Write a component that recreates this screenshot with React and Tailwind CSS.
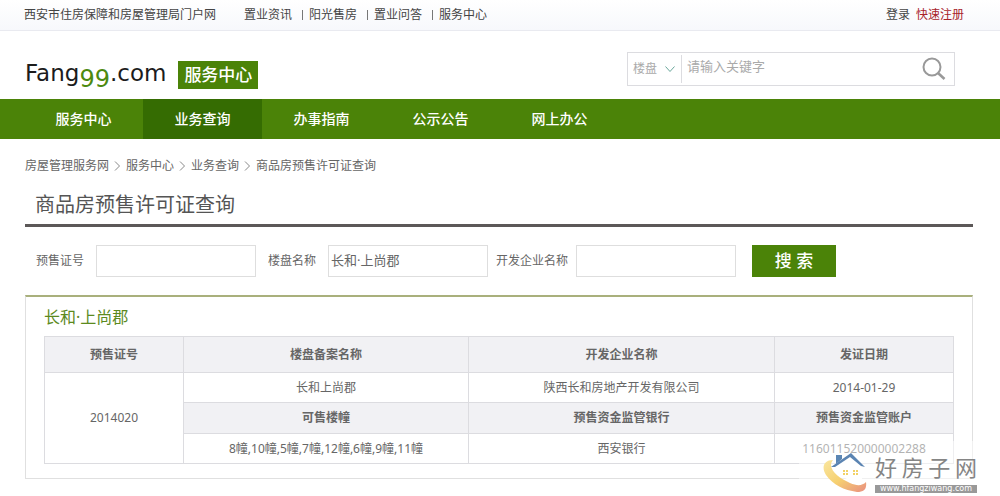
import { useState } from 'react';
import clsx from 'clsx';

const topLinks = ['置业资讯', '阳光售房', '置业问答', '服务中心'];

const navItems = ['服务中心', '业务查询', '办事指南', '公示公告', '网上办公'];

const crumbs = ['房屋管理服务网', '服务中心', '业务查询', '商品房预售许可证查询'];

const searchFields = [
  { name: 'permitNo', label: '预售证号', className: 'gap-3 mr-3' },
  { name: 'projectName', label: '楼盘名称', className: 'gap-3 mr-2' },
  { name: 'company', label: '开发企业名称', className: 'gap-2 mr-4' },
];

const permit = {
  title: '长和·上尚郡',
  number: '2014020',
  project: '长和上尚郡',
  company: '陕西长和房地产开发有限公司',
  date: '2014-01-29',
  buildings: '8幢,10幢,5幢,7幢,12幢,6幢,9幢,11幢',
  bank: '西安银行',
  account: '116011520000002288',
};

const TopBar = () => (
  <div className="flex h-[31px] items-center border-b border-[#e9eaf0] bg-linear-to-b from-white to-[#f7f8fc] pl-6 pr-9 text-[#444]">
    <a href="#home" className="mr-7">西安市住房保障和房屋管理局门户网</a>
    <ul className="flex items-center">
      {topLinks.map((link, i) => (
        <li key={link} className="flex items-center">
          {i > 0 && <span className="ml-2.5 mr-1.5 h-2.5 w-px bg-[#777]" />}
          <a href="#link">{link}</a>
        </li>
      ))}
    </ul>
    <div className="ml-auto flex gap-1.5">
      <a href="#login">登录</a>
      <a href="#register" className="text-[#a8222a]">快速注册</a>
    </div>
  </div>
);

const Logo = () => (
  <div className="flex items-center gap-3">
    <a href="#home" className="font-['DejaVu_Sans',sans-serif] text-[23px] leading-7 text-[#1c1c1c]">
      Fang<span className="align-sub text-2xl leading-none text-[#4d8a10]">99</span>.com
    </a>
    <span className="flex h-7 items-center bg-[#4b8308] px-1.5 text-[17px] font-medium text-white">服务中心</span>
  </div>
);

const SiteSearch = () => (
  <form className="flex h-[34px] w-[328px] items-center border border-[#dcdce0]" onSubmit={(e) => e.preventDefault()}>
    <div className="relative flex h-7 w-[54px] items-center border-r border-[#dcdce0]">
      <select aria-label="类别" className="w-full appearance-none bg-transparent pl-[5px] text-[#aaa] outline-none">
        <option>楼盘</option>
      </select>
      <svg className="pointer-events-none absolute right-1.5 h-2 w-2.5" viewBox="0 0 10 8" fill="none" stroke="#6aa79b">
        <path d="M.5 1.5L5 6.5l4.500-5" />
      </svg>
    </div>
    <input
      aria-label="关键字"
      placeholder="请输入关键字"
      className="min-w-0 flex-1 px-[5px] pb-1 text-[13px] outline-none placeholder:text-[#aaa]"
    />
    <button type="submit" aria-label="搜索" className="px-2">
      <svg className="h-6 w-6" viewBox="0 0 24 24" fill="none" stroke="#999" strokeWidth="2">
        <circle cx="10" cy="10" r="8.500" />
        <path d="M16 16l6.500 6" strokeWidth="2.600" />
      </svg>
    </button>
  </form>
);

const MainNav = () => (
  <nav className="flex h-10 bg-[#4b8308] pl-6 text-sm font-medium text-white">
    {navItems.map((item, i) => (
      <a
        key={item}
        href="#nav"
        className={clsx('flex w-[119px] items-center justify-center', i === 1 && 'bg-[#356c02]')}
      >
        {item}
      </a>
    ))}
  </nav>
);

const Breadcrumb = () => (
  <nav className="flex h-[54px] items-center">
    {crumbs.map((crumb, i) => (
      <span key={crumb} className="flex items-center">
        {i > 0 && (
          <svg className="mx-[5px] h-2.5 w-[7px]" viewBox="0 0 7 10" fill="none" stroke="#888">
            <path d="M1 .5L5.5 5 1 9.5" />
          </svg>
        )}
        <a href="#crumb">{crumb}</a>
      </span>
    ))}
  </nav>
);

const SearchForm = () => {
  const [values, setValues] = useState({ permitNo: '', projectName: '长和·上尚郡', company: '' });

  return (
    <form className="flex items-center pl-[11px] pt-[18px]" onSubmit={(e) => e.preventDefault()}>
      {searchFields.map((field) => (
        <div key={field.name} className={clsx('flex items-center', field.className)}>
          <label htmlFor={field.name}>{field.label}</label>
          <input
            id={field.name}
            value={values[field.name]}
            onChange={(e) => setValues({ ...values, [field.name]: e.target.value })}
            className="h-8 w-40 border border-[#dedede] px-0.5 pb-1 text-[13px] outline-none"
          />
        </div>
      ))}
      <button type="submit" className="h-8 w-[84px] bg-[#4b8308] text-[17px] font-medium text-white">
        搜 索
      </button>
    </form>
  );
};

const Head = ({ children }) => (
  <th className="border border-[#dcdce0] bg-[#f1f1f4] font-bold">{children}</th>
);

const Cell = ({ children, ...props }) => (
  <td className="border border-[#dcdce0]" {...props}>{children}</td>
);

const PermitTable = () => (
  <section className="mt-[18px] border border-t-2 border-[#e0e0e0] border-t-[#a9b07c] px-[18px] pb-3.5">
    <h2 className="flex h-[39px] items-center text-base text-[#5c8a1e]">{permit.title}</h2>
    <table className="w-full table-fixed border-collapse text-center">
      <colgroup>
        <col className="w-[139px]" />
        <col className="w-[285px]" />
        <col />
        <col className="w-[179px]" />
      </colgroup>
      <tbody>
        <tr className="h-9">
          <Head>预售证号</Head>
          <Head>楼盘备案名称</Head>
          <Head>开发企业名称</Head>
          <Head>发证日期</Head>
        </tr>
        <tr className="h-[30px]">
          <Cell rowSpan={3}>{permit.number}</Cell>
          <Cell>{permit.project}</Cell>
          <Cell>{permit.company}</Cell>
          <Cell>{permit.date}</Cell>
        </tr>
        <tr className="h-[31px]">
          <Head>可售楼幢</Head>
          <Head>预售资金监管银行</Head>
          <Head>预售资金监管账户</Head>
        </tr>
        <tr className="h-[30px]">
          <Cell>{permit.buildings}</Cell>
          <Cell>{permit.bank}</Cell>
          <Cell>{permit.account}</Cell>
        </tr>
      </tbody>
    </table>
  </section>
);

const Watermark = () => (
  <div className="pointer-events-none absolute bottom-0 right-[23px] flex h-14 items-end bg-white/50 pb-1 pl-6">
    <svg className="h-10 w-11 shrink-0" viewBox="0 0 44 40">
      <defs>
        <linearGradient id="swoosh" x1="0" y1="0" x2="1" y2="1">
          <stop offset="0" stopColor="#f9e6a0" />
          <stop offset=".5" stopColor="#f6d070" />
          <stop offset="1" stopColor="#e98f80" />
        </linearGradient>
      </defs>
      <path d="M10 7C1 7-2 14 3 22c7 10 18 15 31 17 7 0 10-3 9-10-4 4-9 4-16 1C18 26 8 19 8 12c0-2 1-4 2-5z" fill="url(#swoosh)" />
      <path d="M13 2h6v4l-6 5z" fill="#5b86b4" />
      <path d="M11 14L27 4l12 9v13c-4 3-9 3-15 0-5-2-10-7-13-12z" fill="#fff" />
      <path d="M8 14L28 0l14 14-4-1L27 4 12 14z" fill="#5b84b2" />
      <path d="M20 17h2v2h-2zM23 17h2v2h-2zM20 20h2v2h-2zM23 20h2v2h-2zM30 17h2v2h-2zM33 17h2v2h-2zM30 20h2v2h-2zM33 20h2v2h-2z" fill="#f2d266" />
    </svg>
    <div className="ml-2 w-[102px]">
      <div className="flex items-center justify-between font-['Liberation_Sans','Noto_Sans_CJK_SC',sans-serif] text-[22px] leading-5 text-[#858585]">
        <span>好</span><span>房</span><span>子</span><span>网</span>
      </div>
      <div className="mt-1.5 h-2 bg-[#999] text-center font-['DejaVu_Sans',sans-serif] text-[8px] leading-2 text-white">
        www.hfangziwang.com
      </div>
    </div>
  </div>
);

const App = () => (
  <div className="bg-white font-['Noto_Sans','Noto_Sans_CJK_SC',sans-serif] text-xs text-[#666]">
    <TopBar />
    <header className="flex h-[68px] items-center justify-between pl-[25px] pr-[45px]">
      <div className="pt-5">
        <Logo />
      </div>
      <div className="pt-2">
        <SiteSearch />
      </div>
    </header>
    <MainNav />
    <main className="relative pb-[18px] pl-[25px] pr-[27px]">
      <Breadcrumb />
      <h1 className="flex h-[34px] items-start border-b-3 border-[#5c5858] pl-2.5 text-xl leading-6 text-[#555]">
        商品房预售许可证查询
      </h1>
      <SearchForm />
      <PermitTable />
      <Watermark />
    </main>
  </div>
);

export default App;
